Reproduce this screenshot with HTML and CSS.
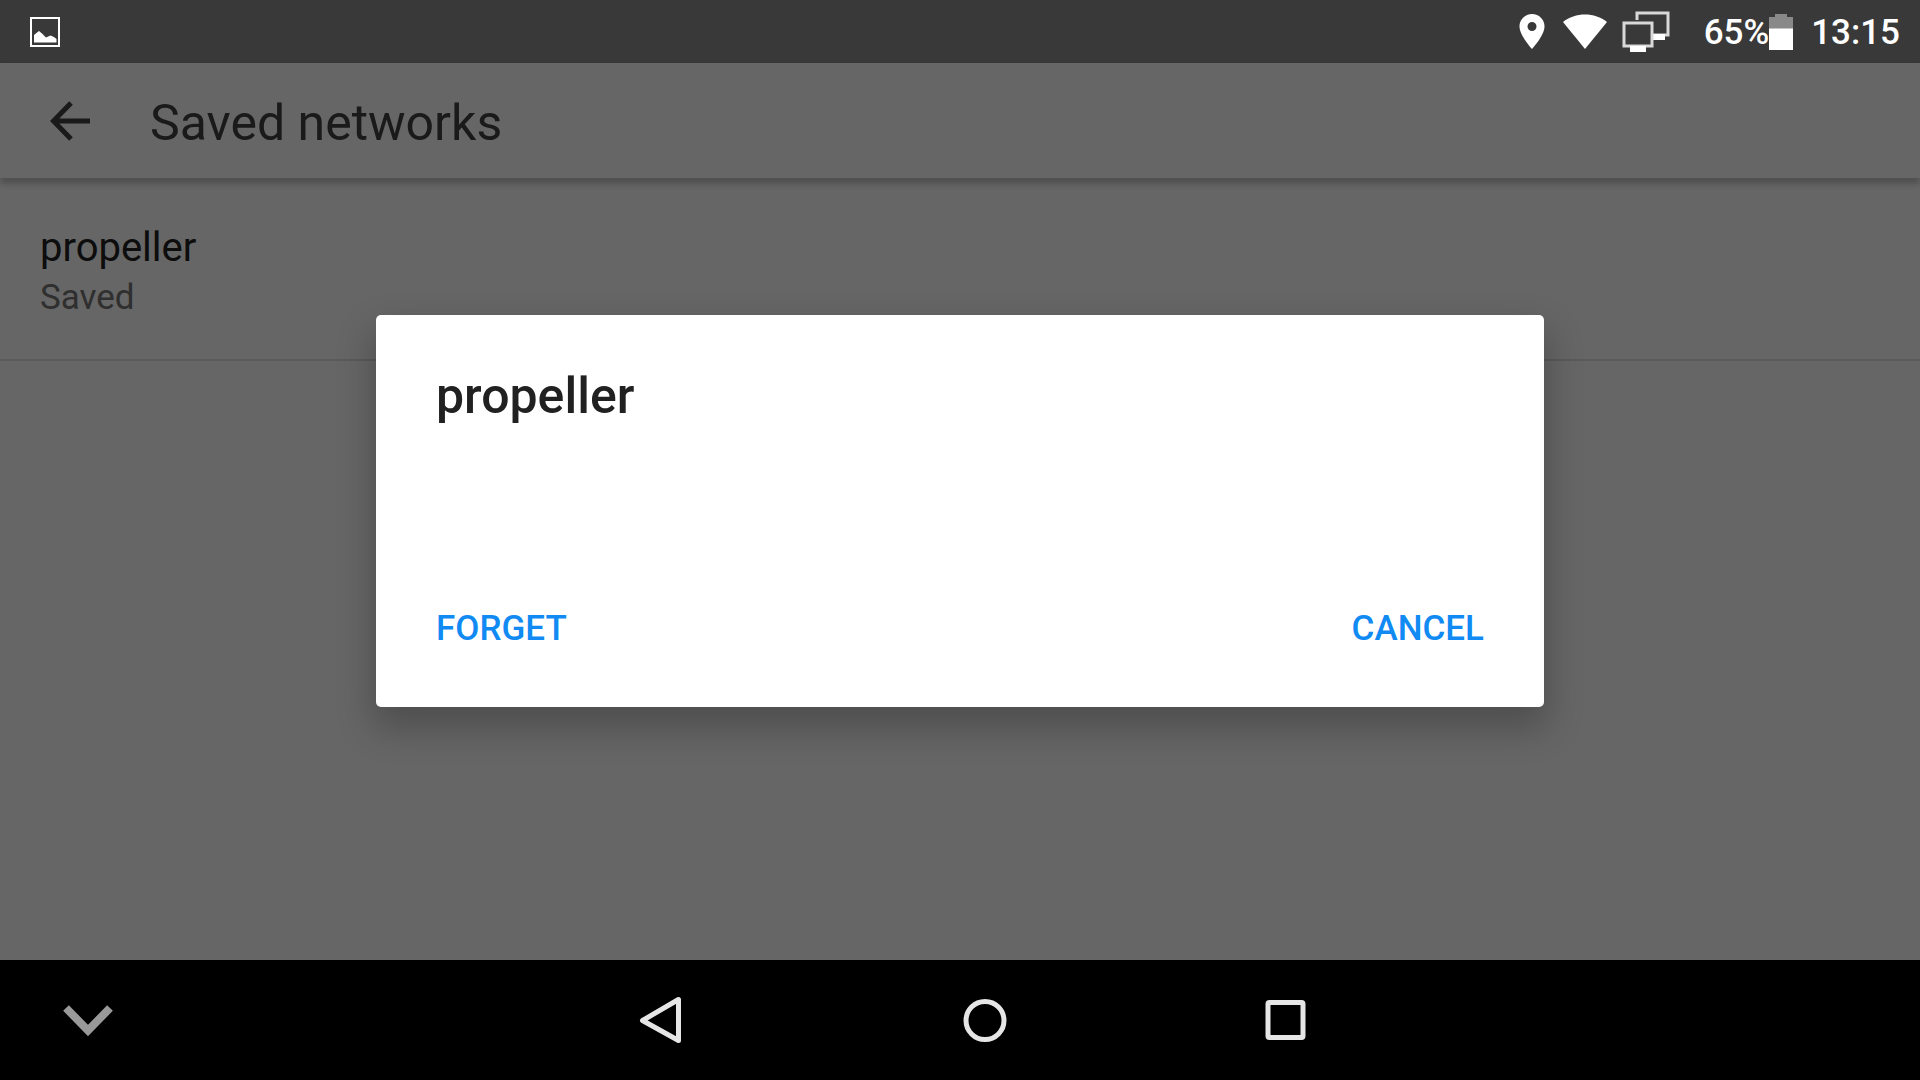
FILE: index.html
```html
<!DOCTYPE html>
<html lang="en">
<head>
    <meta charset="UTF-8">
    <meta name="viewport" content="width=device-width, initial-scale=1.0">
    <title>Saved networks</title>
    <link rel="stylesheet" href="styles.css">
</head>
<body>
    <div class="status-bar">
        <svg class="notification" width="30" height="30" viewBox="0 0 30 30">
            <rect x="1" y="1" width="28" height="28" fill="none" stroke="#fff" stroke-width="2"/>
            <path d="M4 25.500V18l3-2.500 2-1.500 3 2.500 4 4 4.500-2 3.500 1.500 2.500 2v3.500z" fill="#fff"/>
        </svg>
        <div class="system-icons">
            <svg width="26" height="36" viewBox="0 0 26 36">
                <path fill="#fff" fill-rule="evenodd" d="M13 0C6 0 .5 5.500.5 12.500.5 21.500 13 35 13 35s12.500-13.500 12.500-22.500C25.500 5.500 20 0 13 0zm0 8a4.500 4.500 0 1 1 0 9 4.500 4.500 0 0 1 0-9z"/>
            </svg>
            <svg class="wifi" width="44" height="36" viewBox="0 0 44 36">
                <path fill="#fff" d="M22 35L0 8C6 3 14 .5 22 .5S38 3 44 8z"/>
            </svg>
            <svg class="screens" width="48" height="42" viewBox="0 0 48 42">
                <path d="M15 9V2h31v22H31" fill="none" stroke="#d9d9d9" stroke-width="3"/>
                <path d="M31 23h12v6H31z" fill="#fff"/>
                <rect x="2" y="12" width="28" height="23" fill="none" stroke="#d9d9d9" stroke-width="3"/>
                <path d="M8 35h16v6H8z" fill="#fff"/>
            </svg>
            <span>65%</span>
            <svg width="24" height="36" viewBox="0 0 24 36">
                <path fill="#898989" d="M0 3h6V0h12v3h6v12H0z"/>
                <path fill="#fff" d="M0 14.500h24V36H0z"/>
            </svg>
            <span class="clock">13:15</span>
        </div>
    </div>

    <main class="screen">
        <header class="app-bar">
            <button class="back" aria-label="Navigate up">
                <svg width="40" height="40" viewBox="0 0 40 40">
                    <path d="M40 20H5M21 2L3.500 20 21 38" fill="none" stroke="currentColor" stroke-width="5"/>
                </svg>
            </button>
            <h1>Saved networks</h1>
        </header>
        <ul class="networks">
            <li class="network">
                <div class="network-name">propeller</div>
                <div class="network-state">Saved</div>
            </li>
        </ul>

        <div class="overlay">
            <div class="dialog-frame">
                <div class="dialog" role="dialog" aria-labelledby="dialog-title">
                    <h2 id="dialog-title">propeller</h2>
                    <div class="dialog-actions">
                        <button>FORGET</button>
                        <button>CANCEL</button>
                    </div>
                </div>
            </div>
        </div>
    </main>

    <nav class="nav-bar">
        <button aria-label="Hide navigation bar">
            <svg width="50" height="32" viewBox="0 0 50 32">
                <path d="M3 4l22 22.500L47 4" fill="none" stroke="#999" stroke-width="8"/>
            </svg>
        </button>
        <div class="nav-keys">
            <button aria-label="Back">
                <svg width="100" height="50" viewBox="0 0 100 50">
                    <path d="M43.500 4.500v41L7.500 25.500z" fill="none" stroke="#e6e6e6" stroke-width="5" stroke-linejoin="round"/>
                </svg>
            </button>
            <button aria-label="Home">
                <svg width="100" height="50" viewBox="0 0 100 50">
                    <circle cx="50" cy="25.500" r="19" fill="none" stroke="#e6e6e6" stroke-width="5"/>
                </svg>
            </button>
            <button aria-label="Overview">
                <svg width="100" height="50" viewBox="0 0 100 50">
                    <rect x="33" y="7.500" width="35" height="35" rx="1.500" fill="none" stroke="#e6e6e6" stroke-width="5"/>
                </svg>
            </button>
        </div>
    </nav>
</body>
</html>
```

FILE: styles.css
```css
* {
    box-sizing: border-box;
}

body {
    font-family: Roboto, sans-serif;
    margin: 0;
    min-height: 100vh;
    display: flex;
    flex-direction: column;
    background: #000;
}

h1, h2, ul {
    margin: 0;
    padding: 0;
}

svg {
    display: block;
}

button {
    font: inherit;
    color: inherit;
    background: none;
    border: none;
    padding: 0;
    cursor: pointer;
}

.status-bar {
    display: flex;
    justify-content: space-between;
    align-items: center;
    height: 63px;
    padding: 0 20px 0 30px;
    background: #393939;
    color: #fff;
    font-size: 35px;
    font-weight: 500;
    line-height: 40px;
}

.status-bar span {
    padding-top: 3px;
}

.system-icons {
    display: flex;
    align-items: center;
}

.wifi {
    margin: 0 15px 0 18px;
}

.screens {
    margin-right: 34px;
}

.clock {
    margin-left: 18px;
}

.screen {
    position: relative;
    flex: 1;
    background: #fff;
}

.app-bar {
    display: flex;
    align-items: center;
    gap: 60px;
    height: 115px;
    padding: 0 50px;
    color: #424242;
    box-shadow: 0 6px 6px rgba(0, 0, 0, 0.22);
}

.app-bar h1 {
    padding-top: 4px;
    font-size: 50px;
    font-weight: 400;
    line-height: 60px;
}

.networks {
    list-style: none;
}

.network {
    padding: 44px 40px 38px;
    border-bottom: 2px solid #e0e0e0;
}

.network-name {
    color: #212121;
    font-size: 40px;
    line-height: 52px;
}

.network-state {
    color: #757575;
    font-size: 35px;
    line-height: 47px;
}

.overlay {
    position: absolute;
    inset: 0;
    display: flex;
    justify-content: center;
    align-items: center;
    padding-bottom: 2px;
    background: rgba(0, 0, 0, 0.6);
}

.dialog-frame {
    width: 65%;
    padding: 0 40px;
}

.dialog {
    padding: 51px 60px 58px;
    background: #fff;
    border-radius: 5px;
    box-shadow: 0 18px 36px 4px rgba(0, 0, 0, 0.23);
}

.dialog h2 {
    margin-bottom: 183px;
    color: #212121;
    font-size: 50px;
    font-weight: 500;
    line-height: 60px;
}

.dialog-actions {
    display: flex;
    justify-content: space-between;
    color: #118af4;
    font-size: 35px;
    font-weight: 500;
    line-height: 40px;
}

.nav-bar {
    display: grid;
    grid-template-columns: 175px 1fr 125px;
    height: 120px;
    background: #000;
}

.nav-bar > button {
    display: flex;
    justify-content: center;
    align-items: center;
}

.nav-keys {
    display: flex;
    justify-content: center;
    align-items: center;
    gap: 200px;
}
```
